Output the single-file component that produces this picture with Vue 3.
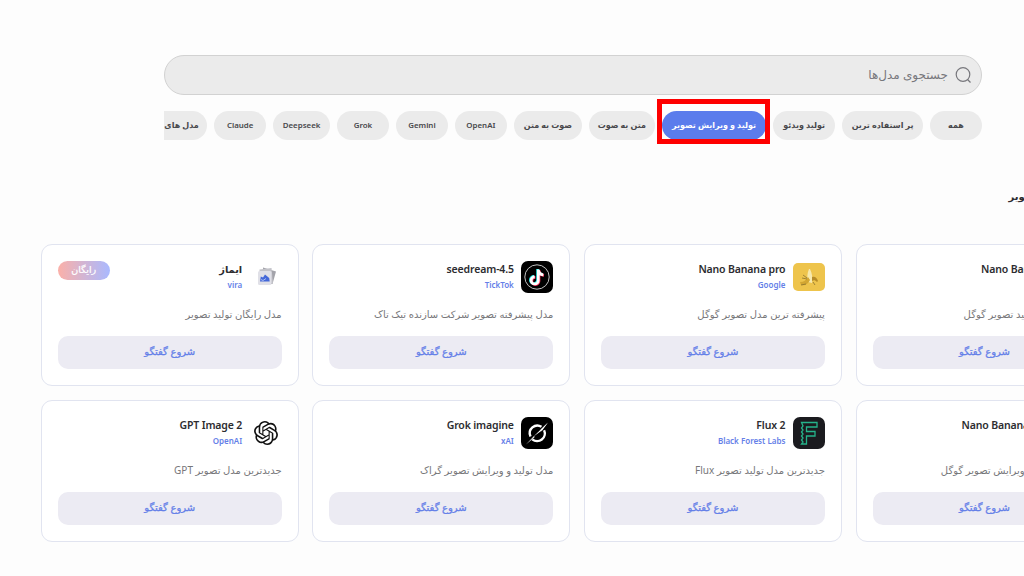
<script setup>
import { ref } from 'vue';

const query = ref('');
const activeTab = ref(3);

// Filter chips, right to left
const tabs = [
    { id: 1, label: 'همه', width: 52 },
    { id: 2, label: 'پر استفاده ترین', width: 81 },
    { id: 4, label: 'تولید ویدئو', width: 62 },
    { id: 3, label: 'تولید و ویرایش تصویر', width: 104.5 },
    { id: 5, label: 'متن به صوت', width: 66 },
    { id: 6, label: 'صوت به متن', width: 68 },
    { id: 7, label: 'OpenAI', width: 52, latin: true },
    { id: 8, label: 'Gemini', width: 52, latin: true },
    { id: 9, label: 'Grok', width: 52, latin: true },
    { id: 10, label: 'Deepseek', width: 57, latin: true },
    { id: 11, label: 'Claude', width: 52, latin: true },
    { id: 12, label: 'مدل های دیگر', width: 70 },
];

const models = [
    { name: 'Nano Banana 2', company: 'Google', icon: 'banana', text: 'جدیدترین مدل تولید تصویر گوگل' },
    { name: 'Nano Banana pro', company: 'Google', icon: 'banana', text: 'پیشرفته ترین مدل تصویر گوگل' },
    { name: 'seedream-4.5', company: 'TickTok', icon: 'tiktok', text: 'مدل پیشرفته تصویر شرکت سازنده تیک تاک' },
    { name: 'ایماژ', company: 'vira', icon: 'image', text: 'مدل رایگان تولید تصویر', free: true, fa: true },
    { name: 'Nano Banana 2 pro', company: 'Google', icon: 'banana', text: 'مدل جدید تولید و ویرایش تصویر گوگل' },
    { name: 'Flux 2', company: 'Black Forest Labs', icon: 'flux', text: 'جدیدترین مدل تولید تصویر Flux' },
    { name: 'Grok imagine', company: 'xAI', icon: 'grok', text: 'مدل تولید و ویرایش تصویر گراک' },
    { name: 'GPT Image 2', company: 'OpenAI', icon: 'openai', text: 'جدیدترین مدل تصویر GPT' },
];
</script>

<template>
    <div class="page">
        <div class="content" dir="rtl">
            <!-- Search box -->
            <label class="search">
                <svg viewBox="0 0 18 18" class="search-icon">
                    <circle cx="9" cy="8.500" r="6.800" />
                    <path d="M13.500 13.500l3 3" />
                </svg>
                <input type="text" v-model="query" placeholder="جستجوی مدل‌ها" />
            </label>

            <!-- Filter chips -->
            <div class="tabs">
                <button v-for="tab in tabs" :key="tab.id" class="tab"
                    :class="{ active: tab.id === activeTab, latin: tab.latin }" :style="{ width: tab.width + 'px' }"
                    @click="activeTab = tab.id">
                    {{ tab.label }}
                </button>
            </div>
            <div class="marker"></div>

            <h2>تولید و ویرایش تصویر</h2>

            <!-- Model cards -->
            <div class="grid">
                <div v-for="model in models" :key="model.name" class="card">
                    <div class="card-head">
                        <div class="logo">
                            <svg v-if="model.icon === 'banana'" viewBox="0 0 32 32">
                                <rect y="2" width="32" height="28" rx="5" fill="#eec44c" />
                                <path d="M16 8c-2 4-2 9-1 13l4 1c1-5 0-10-2-14z" fill="#f7e9ae" />
                                <path d="M15 16c-2 3-4 5-8 5l1 3c4 1 7-1 9-5z" fill="#d3a632" />
                                <path d="M19 16c3-1 5 1 6 4l-1 1c-2-2-3-2-5-1z" fill="#b78b28" />
                                <path d="M9 17l5 1M8 24l5-1M20 21l2 3M10 14l4 3" stroke="#8b7430" stroke-width=".8" fill="none" />
                            </svg>
                            <svg v-else-if="model.icon === 'tiktok'" viewBox="0 0 32 32">
                                <rect width="32" height="32" rx="7" fill="#000" />
                                <circle cx="16" cy="16" r="12.200" fill="none" stroke="#d8d8d8" stroke-width=".9" />
                                <g fill="none" stroke-width="2.700">
                                    <path d="M16.600 8v11a3.600 3.600 0 1 1-3.600-3.600M16.600 8.400c.4 3 2.200 4.800 5 5" stroke="#25f4ee" />
                                    <path d="M18 9v11a3.600 3.600 0 1 1-3.600-3.600M18 9.400c.4 3 2.200 4.800 5 5" stroke="#fe2c55" />
                                    <path d="M17.300 8.400v11a3.600 3.600 0 1 1-3.600-3.600M17.300 8.800c.4 3 2.200 4.800 5 5" stroke="#fff" />
                                </g>
                            </svg>
                            <svg v-else-if="model.icon === 'image'" viewBox="0 0 32 32">
                                <path d="M13 6.500l13 4-3.500 12.500-9-1z" fill="#a3a3aa" />
                                <path d="M9.500 8.500l12-1.500 1.500 15-13 1z" fill="#c2c2c8" />
                                <rect x="8" y="10" width="13.500" height="14" rx="1.500" fill="#e0e0e7" />
                                <path d="M10 20.500l.8-5 2.200 1 2-3 4.200 3.500.5 3.500z" fill="#4468d8" />
                                <path d="M11 18.500l2 1 3-2" stroke="#a9bdf5" fill="none" />
                            </svg>
                            <svg v-else-if="model.icon === 'flux'" viewBox="0 0 32 32">
                                <rect width="32" height="32" rx="7" fill="#1b1b1f" />
                                <path d="M8.500 5.500h15.500v4.500h-10.500v4.500h8.500v4.500h-8.500v8h-5l1.500-2-1.500-2 1.500-2-1.500-2 1.500-2-1.500-2 1.500-2-1.500-2 1.500-2z"
                                    fill="none" stroke="#25b38a" stroke-width="1.300" />
                            </svg>
                            <svg v-else-if="model.icon === 'grok'" viewBox="0 0 32 32">
                                <rect width="32" height="32" rx="7" fill="#000" />
                                <path d="M20.500 9.800a7.600 7.600 0 0 0-11 9.600M11.300 22.300a7.600 7.600 0 0 0 11.800-9" fill="none" stroke="#fff" stroke-width="2.400" />
                                <path d="M5 27.500l7.500-8L27 5.500l-6.500 9-8 6.500z" fill="#fff" />
                                <circle cx="16.500" cy="16" r="4.600" fill="#000" />
                                <path d="M12.500 19.500L26.500 6l-7 8.500z" fill="#fff" />
                            </svg>
                            <svg v-else viewBox="0 0 32 32">
                                <path transform="translate(4 4)" fill="#111"
                                    d="M22.2819 9.8211a5.9847 5.9847 0 0 0-.5157-4.9108 6.0462 6.0462 0 0 0-6.5098-2.9A6.0651 6.0651 0 0 0 4.9807 4.1818a5.9847 5.9847 0 0 0-3.9977 2.9 6.0462 6.0462 0 0 0 .7427 7.0966 5.98 5.98 0 0 0 .511 4.9107 6.051 6.051 0 0 0 6.5146 2.9001A5.9847 5.9847 0 0 0 13.2599 24a6.0557 6.0557 0 0 0 5.7718-4.2058 5.9894 5.9894 0 0 0 3.9977-2.9001 6.0557 6.0557 0 0 0-.7475-7.0729zm-9.022 12.6081a4.4755 4.4755 0 0 1-2.8764-1.0408l.1419-.0804 4.7783-2.7582a.7948.7948 0 0 0 .3927-.6813v-6.7369l2.02 1.1686a.071.071 0 0 1 .038.052v5.5826a4.504 4.504 0 0 1-4.4945 4.4944zm-9.6607-4.1254a4.4708 4.4708 0 0 1-.5346-3.0137l.142.0852 4.783 2.7582a.7712.7712 0 0 0 .7806 0l5.8428-3.3685v2.3324a.0804.0804 0 0 1-.0332.0615L9.74 19.9502a4.4992 4.4992 0 0 1-6.1408-1.6464zM2.3408 7.8956a4.485 4.485 0 0 1 2.3655-1.9728V11.6a.7664.7664 0 0 0 .3879.6765l5.8144 3.3543-2.0201 1.1685a.0757.0757 0 0 1-.071 0l-4.8303-2.7865A4.504 4.504 0 0 1 2.3408 7.8956zm16.5963 3.8558L13.1038 8.364 15.1192 7.2a.0757.0757 0 0 1 .071 0l4.8303 2.7913a4.4944 4.4944 0 0 1-.6765 8.1042v-5.6772a.79.79 0 0 0-.407-.667zm2.0107-3.0231l-.142-.0852-4.7735-2.7818a.7759.7759 0 0 0-.7854 0L9.409 9.2297V6.8974a.0662.0662 0 0 1 .0284-.0615l4.8303-2.7866a4.4992 4.4992 0 0 1 6.6802 4.66zM8.3065 12.863l-2.02-1.1638a.0804.0804 0 0 1-.038-.0567V6.0742a4.4992 4.4992 0 0 1 7.3757-3.4537l-.142.0805L8.704 5.459a.7948.7948 0 0 0-.3927.6813zm1.0976-2.3654l2.602-1.4998 2.6069 1.4998v2.9994l-2.5974 1.4997-2.6067-1.4997Z" />
                            </svg>
                        </div>
                        <div class="titles">
                            <div class="name" :class="{ fa: model.fa }"><bdi>{{ model.name }}</bdi></div>
                            <div class="company">{{ model.company }}</div>
                        </div>
                        <span v-if="model.free" class="badge">رایگان</span>
                    </div>
                    <p>{{ model.text }}</p>
                    <button class="start">شروع گفتگو</button>
                </div>
            </div>
        </div>
    </div>
</template>

<style>
body {
    background: #fdfdfd;
}
</style>

<style scoped>
.page {
    width: 1024px;
    height: 576px;
    overflow: hidden;
    direction: ltr;
    font-family: "Noto Sans", "DejaVu Sans", sans-serif;
    background: #fdfdfd;
}

.content {
    position: relative;
    width: 1073px;
    margin-left: 40.5px;
    padding-top: 55px;
}

.search {
    display: flex;
    align-items: center;
    box-sizing: border-box;
    width: 818px;
    height: 40px;
    margin-right: 131.5px;
    padding: 0 9px;
    border: 1px solid #d2d2d2;
    border-radius: 20px;
    background: #ebebeb;
}

.search-icon {
    width: 18px;
    height: 18px;
    fill: none;
    stroke: #77777c;
    stroke-width: 1.2;
}

input {
    flex: 1;
    padding: 0 6px 2px;
    border: none;
    outline: none;
    background: none;
    font-family: inherit;
    font-size: 12px;
}

input::placeholder {
    color: #77777c;
    opacity: 1;
}

.tabs {
    display: flex;
    gap: 6.95px;
    width: 818px;
    margin: 16px 131.5px 0 0;
    overflow: hidden;
}

.tab {
    flex-shrink: 0;
    height: 29px;
    padding: 0 0 2px;
    border: none;
    border-radius: 14.5px;
    background: #ebebeb;
    color: #48484c;
    font-family: inherit;
    font-size: 8px;
    font-weight: 700;
    white-space: nowrap;
    cursor: pointer;
}

.tab.latin {
    font-size: 7.9px;
    font-weight: 600;
}

.tab.active {
    background: #5b7cec;
    color: #fff;
}

/* Red frame around the selected chip */
.marker {
    position: absolute;
    left: 616.5px;
    top: 99px;
    box-sizing: border-box;
    width: 113px;
    height: 45px;
    border: 5px solid #fe0000;
}

h2 {
    height: 20px;
    margin: 46px 0 38px;
    color: #2c2c30;
    font-size: 10px;
    line-height: 20px;
}

.grid {
    display: grid;
    grid-template-columns: repeat(4, 258px);
    column-gap: 13.6px;
    row-gap: 14px;
}

.card {
    box-sizing: border-box;
    height: 142px;
    padding: 16px;
    border: 1px solid #e1e4f0;
    border-radius: 11px;
    background: #fff;
}

.card-head {
    display: flex;
    gap: 7.5px;
    height: 32px;
}

.logo,
.logo svg {
    display: block;
    width: 32px;
    height: 32px;
}

.name {
    height: 17px;
    color: #2c2c30;
    font-size: 10.5px;
    font-weight: 600;
    letter-spacing: -0.15px;
    line-height: 17px;
}

.name.fa {
    font-size: 9.8px;
    letter-spacing: 0;
}

.company {
    color: #6580e8;
    font-size: 8px;
    font-weight: 600;
    line-height: 13px;
}

.badge {
    width: 52px;
    height: 19px;
    margin-right: auto;
    border-radius: 10px;
    background: linear-gradient(90deg, #fbb0a8, #a9b9ff);
    color: #fff;
    font-size: 9.5px;
    line-height: 18px;
    text-align: center;
    -webkit-text-stroke: 0.2px;
}

p {
    height: 20px;
    margin: 11px 0 12px;
    color: #77777a;
    font-size: 10px;
    line-height: 20px;
    white-space: nowrap;
}

.start {
    display: block;
    width: 100%;
    height: 33px;
    padding: 0 0 3px;
    border: none;
    border-radius: 10px;
    background: #ecebf3;
    color: #6580e8;
    font-family: inherit;
    font-size: 10px;
    font-weight: 400;
    cursor: pointer;
    -webkit-text-stroke: 0.3px;
}
</style>
